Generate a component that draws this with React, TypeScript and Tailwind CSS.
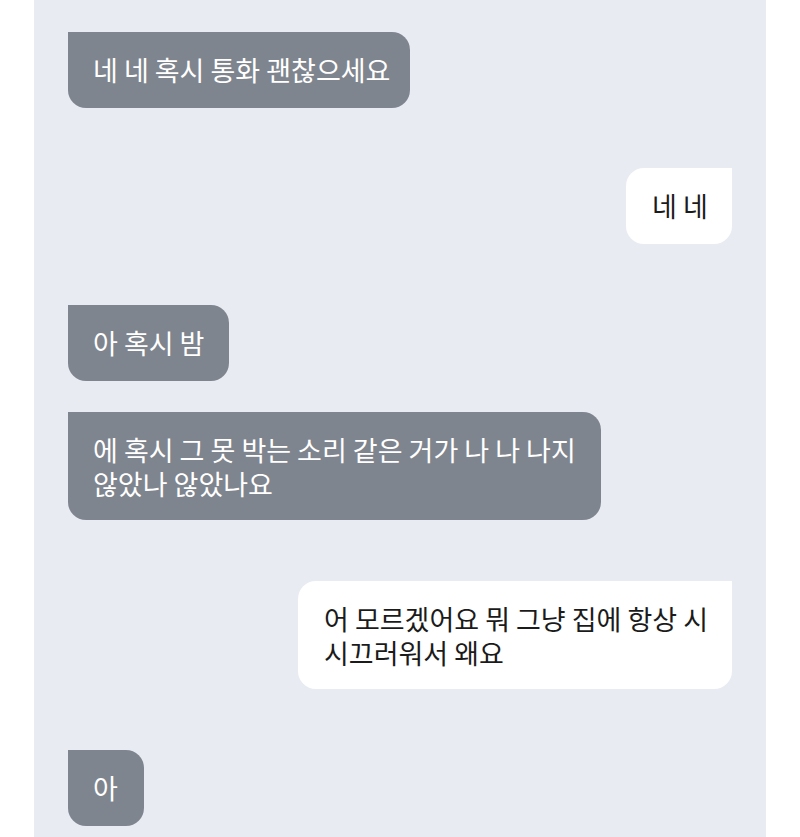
const messages = [
    { mine: false, lines: ["네 네 혹시 통화 괜찮으세요"], mt: "mt-[32px]", w: "w-[342px]" },
    { mine: true, lines: ["네 네"], mt: "mt-[60px]", w: "w-[106px]" },
    { mine: false, lines: ["아 혹시 밤"], mt: "mt-[61px]", w: "w-[161px]" },
    { mine: false, lines: ["에 혹시 그 못 박는 소리 같은 거가 나 나 나지", "않았나 않았나요"], mt: "mt-[31px]", w: "w-[533px]" },
    { mine: true, lines: ["어 모르겠어요 뭐 그냥 집에 항상 시", "시끄러워서 왜요"], mt: "mt-[61px]", w: "w-[434px]" },
    { mine: false, lines: ["아"], mt: "mt-[61px]", w: "w-[76px]" },
];

const App = () => {
    return (
        <div className="w-[800px] h-[837px] bg-white overflow-hidden">
            <div
                className="mx-[34px] h-full bg-[#e9ebf3] flex flex-col px-[34px]"
                style={{ fontFamily: '"Noto Sans CJK KR", "Noto Sans", sans-serif' }}
            >
                {messages.map((msg, index) => (
                    <div
                        key={index}
                        className={`${msg.mt} flex ${msg.mine ? "justify-end" : "justify-start"}`}
                    >
                        <div
                            className={`${msg.w} ${
                                msg.mine
                                    ? "bg-white text-[#1b1b1b] rounded-[18px] rounded-tr-none pl-[26px]"
                                    : "bg-[#7f858e] text-white rounded-[18px] rounded-tl-none pl-[25px]"
                            } ${msg.lines.length > 1 ? "pb-[19px]" : "pb-[21px]"} pt-[21px] text-[27px] leading-[34px] whitespace-nowrap`}
                        >
                            {msg.lines.map((line, i) => (
                                <div key={i}>{line}</div>
                            ))}
                        </div>
                    </div>
                ))}
            </div>
        </div>
    );
};

export default App;
